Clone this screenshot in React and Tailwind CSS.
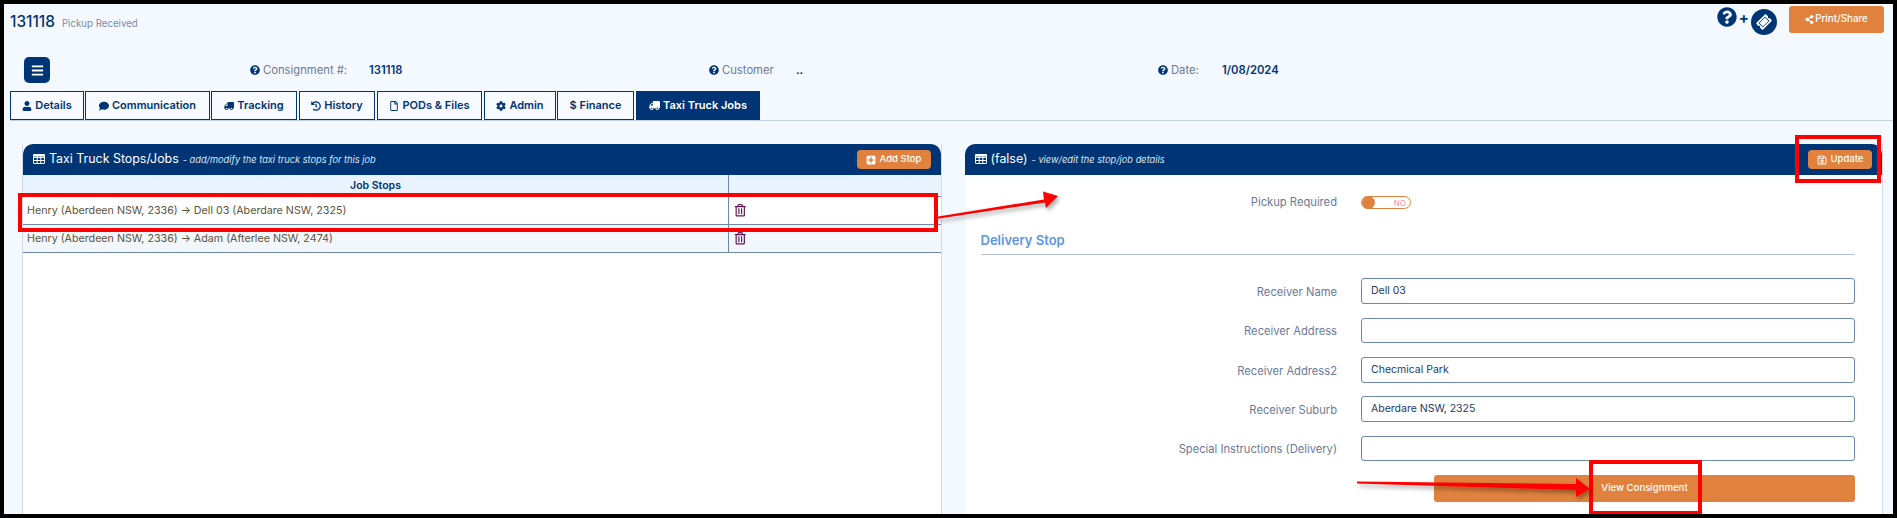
import { FaUser, FaComment, FaTruck, FaHistory, FaRegFile, FaCog, FaQuestionCircle, FaShareAlt, FaRegSave, FaPlusSquare, FaRegTrashAlt, FaBars, FaTicketAlt } from 'react-icons/fa';

const tabs = [
    { label: 'Details', icon: <FaUser />, w: 'w-[74px]' },
    { label: 'Communication', icon: <FaComment />, w: 'w-[125px] ml-[1px]' },
    { label: 'Tracking', icon: <FaTruck className="-scale-x-100" />, w: 'w-[86px] ml-[1px]' },
    { label: 'History', icon: <FaHistory />, w: 'w-[76px] ml-[2px]' },
    { label: 'PODs & Files', icon: <FaRegFile />, w: 'w-[105px] ml-[2px]' },
    { label: 'Admin', icon: <FaCog />, w: 'w-[72px] ml-[2px]' },
    { label: '$ Finance', icon: null, w: 'w-[77px] ml-[1px]' },
];

const fields = [
    { label: 'Receiver Name', value: 'Dell 03', h: 'h-[26px]', mt: 'mt-[23px]' },
    { label: 'Receiver Address', value: '', h: 'h-[25px]', mt: 'mt-[14px]' },
    { label: 'Receiver Address2', value: 'Checmical Park', h: 'h-[26px]', mt: 'mt-[14px]' },
    { label: 'Receiver Suburb', value: 'Aberdare NSW, 2325', h: 'h-[26px]', mt: 'mt-[13px]' },
    { label: 'Special Instructions (Delivery)', value: '', h: 'h-[25px]', mt: 'mt-[14px]' },
];

const stops = [
    { text: 'Henry (Aberdeen NSW, 2336) → Dell 03 (Aberdare NSW, 2325)', bg: 'bg-white' },
    { text: 'Henry (Aberdeen NSW, 2336) → Adam (Afterlee NSW, 2474)', bg: 'bg-[#f2f7fc]' },
];

function TableIcon() {
    return (
        <svg width="12" height="10" viewBox="0 0 12 10" className="mr-[4px] shrink-0" fill="none" stroke="currentColor" strokeWidth="1">
            <rect x="0.5" y="0.5" width="11" height="9" rx="0.5" />
            <path d="M0 3.5H12M0 6.5H12M4.2 1V10M7.8 1V10" />
            <path d="M0 1.5H12" strokeWidth="2" />
        </svg>
    );
}

function InfoItem({ label, value, col, labelW }) {
    return (
        <div className={`flex items-center ${col}`}>
            <FaQuestionCircle className="text-[10px] text-[#003575] mr-[3px]" />
            <span className={`text-[11.25px] text-[#6b7a99] ${labelW}`}>{label}</span>
            <span className="text-[11.25px] font-semibold text-[#003575]">{value}</span>
        </div>
    );
}

function PanelHeader({ title, sub, children }) {
    return (
        <div className="h-[31px] bg-[#003575] rounded-t-[10px] flex items-center justify-between pl-[10px] pr-[10px] text-white">
            <div className="flex items-center">
                <TableIcon />
                <span className="text-[12.4px]">{title}</span>
                <span className="text-[9.25px] italic ml-[4px] text-[#dbe7f5]">- {sub}</span>
            </div>
            {children}
        </div>
    );
}

function Annotations() {
    return (
        <>
            <div className="absolute left-[14px] top-[189px] w-[920px] h-[39px] border-4 border-[#ff0000]" />
            <div className="absolute left-[1791px] top-[131px] w-[86px] h-[48px] border-4 border-[#ff0000]" />
            <div className="absolute left-[1585px] top-[456px] w-[113px] h-[55px] border-4 border-[#ff0000]" />
            <svg className="absolute left-0 top-0 pointer-events-none" width="1889" height="510">
                <defs>
                    <filter id="arrowShadow" x="-10%" y="-50%" width="120%" height="200%">
                        <feDropShadow dx="2" dy="3" stdDeviation="2" floodColor="#000" floodOpacity="0.35" />
                    </filter>
                </defs>
                <g filter="url(#arrowShadow)" fill="#ff0000">
                    <polygon points="931,213 1040,195.5 1039,187.5 1054,192 1042,204 1041,198.5 932,215" />
                    <polygon points="1353,477.5 1572,480 1572,474 1586,485 1572,493 1572,486 1353,479.5" />
                </g>
            </svg>
        </>
    );
}

export default function App() {
    return (
        <div className="relative w-[1897px] h-[518px] border-4 border-black bg-[#f4f9ff] overflow-hidden font-['Inter',sans-serif]">
            {/* top bar */}
            <div className="h-[49px] flex justify-between pl-[6px] pr-[9px]">
                <div className="flex items-baseline pt-[6px]">
                    <span className="text-[15.4px] font-medium text-[#003575]">131118</span>
                    <span className="text-[9.7px] text-[#7d8ba6] ml-[7px]">Pickup Received</span>
                </div>
                <div className="flex items-start pt-[2px]">
                    <FaQuestionCircle className="text-[20px] text-[#003575] mt-[1px]" />
                    <span className="text-[15px] font-bold text-[#003575] mt-[2px] mx-[2px] leading-[20px]">+</span>
                    <div className="w-[26px] h-[26px] rounded-full bg-[#003575] flex items-center justify-center mt-[3px]">
                        <FaTicketAlt className="text-[14px] text-white -rotate-45" />
                    </div>
                    <button className="ml-[12px] w-[95px] h-[27px] bg-[#e0823d] rounded-[3px] text-white text-[9.8px] font-medium flex items-center justify-center">
                        <FaShareAlt className="text-[9px] mr-[1px]" />Print/Share
                    </button>
                </div>
            </div>

            {/* consignment info */}
            <div className="h-[38px] flex items-start pl-[20px]">
                <div className="w-[26px] h-[26px] bg-[#003575] rounded-[5px] flex items-center justify-center mt-[4px]">
                    <FaBars className="text-[13px] text-white" />
                </div>
                <div className="flex items-center h-[26px] mt-[4px] ml-[200px]">
                    <InfoItem label="Consignment #:" value="131118" col="w-[459px]" labelW="w-[106px]" />
                    <InfoItem label="Customer" value=".." col="w-[449px]" labelW="w-[74px]" />
                    <InfoItem label="Date:" value="1/08/2024" col="w-[200px]" labelW="w-[51px]" />
                </div>
            </div>

            {/* tabs */}
            <div className="flex items-stretch h-[30px] ml-[6px] mr-[-4px] border-b border-[#bfd0e3]">
                {tabs.map((t) => (
                    <div key={t.label} className={`${t.w} h-[29px] border border-[#003575] flex items-center justify-center gap-[3px] text-[11px] font-semibold text-[#003575] bg-[#f7faff]`}>
                        {t.icon && <span className="text-[10px]">{t.icon}</span>}
                        {t.label}
                    </div>
                ))}
                <div className="w-[124px] h-[29px] ml-[2px] bg-[#003575] flex items-center justify-center gap-[3px] text-[11px] font-semibold text-white">
                    <FaTruck className="text-[11px] -scale-x-100" />
                    Taxi Truck Jobs
                </div>
            </div>

            {/* panels */}
            <div className="flex gap-[23px] pl-[18px] pr-[10px] pt-[23px] h-[393px]">
                <div className="flex-1 bg-white border-x border-[#d4dbe6]">
                    <PanelHeader title="Taxi Truck Stops/Jobs" sub="add/modify the taxi truck stops for this job">
                        <button className="w-[74px] h-[19px] bg-[#e0823d] rounded-[4px] text-white text-[9.5px] font-medium flex items-center justify-center gap-[4px]">
                            <FaPlusSquare className="text-[10px]" />Add Stop
                        </button>
                    </PanelHeader>
                    <div className="flex h-[22px] bg-[#e8f3fd] border-b border-[#6c87b0] text-[10.5px] font-semibold text-[#003575]">
                        <div className="w-[706px] flex items-center justify-center border-r border-[#6c87b0]">Job Stops</div>
                    </div>
                    {stops.map((s) => (
                        <div key={s.text} className={`flex h-[28px] border-b border-[#6c87b0] ${s.bg}`}>
                            <div className="w-[706px] flex items-center pl-[4px] pt-[1px] border-r border-[#6c87b0] text-[10.7px] text-[#5c5340]">{s.text}</div>
                            <div className="flex items-center pl-[5px]">
                                <FaRegTrashAlt className="text-[12.5px] text-[#5f1a55]" />
                            </div>
                        </div>
                    ))}
                </div>

                <div className="flex-1 bg-white border-r border-[#d4dbe6]">
                    <PanelHeader title="(false)" sub="view/edit the stop/job details">
                        <button className="w-[64px] h-[19px] bg-[#e0823d] rounded-[4px] text-white text-[9.5px] font-medium flex items-center justify-center gap-[4px]">
                            <FaRegSave className="text-[10px]" />Update
                        </button>
                    </PanelHeader>
                    <div className="pr-[27px] text-[11.2px]">
                        <div className="flex items-center justify-end mt-[21px] h-[13px]">
                            <span className="text-[#6b7a99]">Pickup Required</span>
                            <div className="ml-[24px] mr-[444px] w-[50px] h-[13px] rounded-full border border-[#e0823d] flex items-center justify-end pr-[4px] relative">
                                <span className="absolute left-0 top-[-1px] w-[13px] h-[13px] rounded-full bg-[#e0823d]" />
                                <span className="text-[8px] text-[#ee8f9f]">NO</span>
                            </div>
                        </div>
                        <div className="ml-[16px] mt-[22px] pb-[4px] leading-[19px] border-b border-[#b3c1d4] text-[13px] font-semibold text-[#5b96e6]">Delivery Stop</div>
                        {fields.map((f) => (
                            <div key={f.label} className={`flex items-center justify-end ${f.mt}`}>
                                <span className="text-[#6b7a99] mt-[2px]">{f.label}</span>
                                <div className={`ml-[24px] w-[494px] ${f.h} border border-[#6c87b0] rounded-[3px] bg-white flex items-center pl-[9px] pb-[1px] text-[10.5px] text-[#1f3a68]`}>{f.value}</div>
                            </div>
                        ))}
                        <div className="flex justify-end mt-[14px]">
                            <button className="w-[421px] h-[27px] bg-[#e0823d] rounded-[3px] text-white text-[9.6px] font-medium">View Consignment</button>
                        </div>
                    </div>
                </div>
            </div>

            <Annotations />
        </div>
    );
}
